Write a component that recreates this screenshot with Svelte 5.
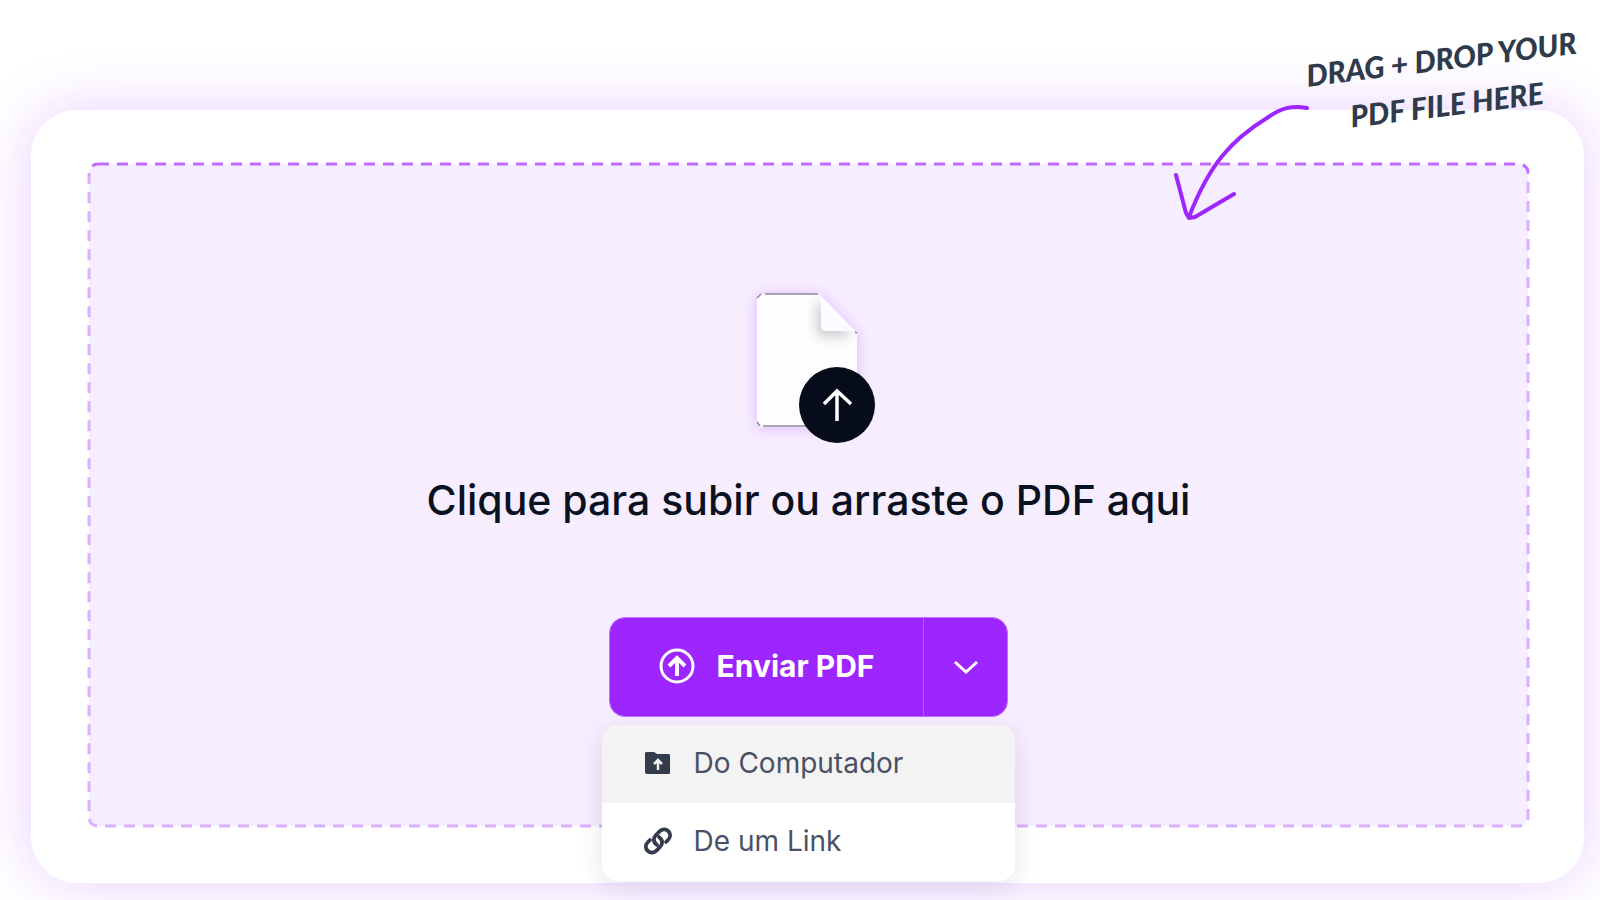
<script>
  let menuOpen = $state(true)
  let active = $state('computer')

  const sources = [
    { id: 'computer', label: 'Do Computador' },
    { id: 'link', label: 'De um Link' }
  ]
</script>

<main class="page">
  <section class="card">
    <div class="dropzone">
      <svg class="outline" aria-hidden="true">
        <defs>
          <linearGradient id="dash" x1="0" y1="0" x2="0" y2="1">
            <stop offset="0.01" stop-color="#c06cff" />
            <stop offset="0.02" stop-color="#dbb0ff" />
            <stop offset="0.98" stop-color="#dbb0ff" />
          </linearGradient>
        </defs>
        <rect width="100%" height="100%" rx="9" />
      </svg>

      <svg class="file" viewBox="2 0 136 152" aria-hidden="true">
        <defs>
          <filter id="glow" x="-30%" y="-30%" width="160%" height="160%">
            <feDropShadow dx="0" dy="1" stdDeviation="7" flood-color="#9d26ff" flood-opacity="0.24" />
          </filter>
          <filter id="fold" x="-60%" y="-60%" width="220%" height="220%">
            <feDropShadow dx="-4" dy="5" stdDeviation="6" flood-color="#000" flood-opacity="0.2" />
          </filter>
          <clipPath id="paper">
            <path d="M22 1H80L118 40V134H22Q18 134 18 130V5Q18 1 22 1Z" />
          </clipPath>
        </defs>
        <path d="M22 1H80L118 40V134H22Q18 134 18 130V5Q18 1 22 1Z" fill="#fdfcff" filter="url(#glow)" />
        <g clip-path="url(#paper)">
          <path d="M82 1V32Q82 38 88 38H118Z" fill="#fdfbff" filter="url(#fold)" />
        </g>
        <path d="M26 1H79M24 133H70M18 5L22 1M18 129L21 133M116 39L118 40" fill="none" stroke="#8d8a98" stroke-width="1.5" />
        <circle cx="98" cy="112" r="38" fill="#070c1a" />
        <path d="M98 128V97M85 111L98 98L112 111" fill="none" stroke="#fff" stroke-width="3.5" />
      </svg>

      <h1>Clique para subir ou arraste o PDF aqui</h1>

      <div class="upload">
        <div class="split">
          <button class="send" type="button">
            <svg viewBox="0 0 36 36" aria-hidden="true">
              <circle cx="18" cy="18" r="16" />
              <path d="M18 28V11M10 18L18 10L26 18" stroke-width="4" />
            </svg>
            Enviar PDF
          </button>
          <button
            class="toggle"
            type="button"
            aria-label="Mais opções"
            aria-expanded={menuOpen}
            onclick={() => (menuOpen = !menuOpen)}
          >
            <svg viewBox="0 0 26 14" aria-hidden="true">
              <path d="M2 2L13 12L24 2" />
            </svg>
          </button>
        </div>

        {#if menuOpen}
          <div class="menu">
            {#each sources as source (source.id)}
              <button
                type="button"
                class="item"
                class:active={active === source.id}
                onmouseenter={() => (active = source.id)}
              >
                {#if source.id === 'computer'}
                  <svg viewBox="0 0 28 28" aria-hidden="true">
                    <path d="M1 4Q1 3 3 3H10L13 5H25Q26 5 26 7V24Q26 25 25 25H3Q1 25 1 23Z" fill="#333c4d" />
                    <path d="M14 21V11M10 15L14 11L18 15" fill="none" stroke="#f3f3f4" stroke-width="2.5" />
                  </svg>
                {:else}
                  <svg viewBox="0 0 28 28" aria-hidden="true">
                    <g fill="none" stroke="#333c4d" stroke-width="3.8" stroke-linecap="round">
                      <path d="M13 18C9 15 9 11 12 8L16 4C22 -1 30 7 24 13L22 15" />
                      <path d="M15 10C19 13 19 17 16 20L12 24C6 29 -2 21 4 15L6 13" />
                    </g>
                  </svg>
                {/if}
                {source.label}
              </button>
            {/each}
          </div>
        {/if}
      </div>
    </div>

    <svg class="arrow" viewBox="0 0 136 118" aria-hidden="true">
      <path d="M134 5C119 2 108 5 94 15C58 37 36 62 16 114M3 72L13 110L16 115L22 114L61 91" />
    </svg>
    <p class="note">DRAG + DROP YOUR<br />PDF FILE HERE</p>
  </section>
</main>

<style>
  :global(body) {
    margin: 0;
    background: #fff;
  }

  .page {
    box-sizing: border-box;
    padding: 110px 16px 17px 31px;
    overflow: hidden;
    font-family: Inter, "Liberation Sans", sans-serif;
  }

  .card {
    position: relative;
    padding: 54px 56px 57px 58px;
    border-radius: 46px;
    background: #fff;
    box-shadow: 0 0 60px rgba(157, 38, 255, 0.22);
  }

  .dropzone {
    position: relative;
    display: flex;
    flex-direction: column;
    align-items: center;
    padding: 129px 24px 109px;
    border-radius: 9px;
    background: #f6edff;
  }

  .outline {
    position: absolute;
    inset: 0;
    width: 100%;
    height: 100%;
    overflow: visible;
    pointer-events: none;
  }

  .outline rect {
    fill: none;
    stroke: url(#dash);
    stroke-width: 3;
    stroke-dasharray: 11 8;
  }

  .file {
    width: 136px;
    height: 152px;
    overflow: visible;
  }

  h1 {
    margin: 31px 0 93px;
    color: #0a1222;
    font-size: 41px;
    font-weight: 500;
    line-height: 48px;
    text-align: center;
  }

  .upload {
    position: relative;
  }

  .split {
    display: flex;
    height: 100px;
    box-sizing: border-box;
    border: 1px solid #bd70ff;
    border-radius: 16px;
    overflow: hidden;
    background: #9d26ff;
  }

  button {
    border: 0;
    background: none;
    color: inherit;
    font-family: inherit;
    cursor: pointer;
  }

  .send {
    display: flex;
    align-items: center;
    gap: 22px;
    padding: 0 49px 2px;
    color: #fff;
    font-size: 30px;
    font-weight: 700;
  }

  .send svg {
    width: 36px;
    height: 36px;
    fill: none;
    stroke: #fff;
    stroke-width: 3;
  }

  .toggle {
    display: flex;
    align-items: center;
    justify-content: center;
    width: 84px;
    border-left: 1px solid #b65cff;
  }

  .toggle svg {
    width: 26px;
    height: 14px;
    fill: none;
    stroke: #fff;
    stroke-width: 3;
  }

  .menu {
    position: absolute;
    top: 108px;
    left: -7px;
    right: -7px;
    z-index: 2;
    border-radius: 16px;
    overflow: hidden;
    background: #fff;
    box-shadow: 0 6px 24px rgba(60, 30, 100, 0.12);
  }

  .item {
    display: flex;
    align-items: center;
    gap: 22px;
    width: 100%;
    height: 78px;
    padding: 0 42px 3px;
    color: #4a5164;
    font-size: 28px;
    text-align: left;
  }

  .item.active {
    background: #f3f3f4;
  }

  .item svg {
    width: 28px;
    height: 28px;
    overflow: visible;
  }

  .arrow {
    position: absolute;
    top: -7px;
    right: 275px;
    width: 136px;
    height: 118px;
    fill: none;
    stroke: #9d26ff;
    stroke-width: 4;
    stroke-linecap: round;
    stroke-linejoin: round;
  }

  .note {
    position: absolute;
    top: -75px;
    right: 4px;
    margin: 0;
    color: #2f3a4b;
    font-family: Lato, sans-serif;
    font-size: 30px;
    font-style: italic;
    font-weight: 900;
    line-height: 46px;
    text-align: center;
    white-space: nowrap;
    transform: rotate(-7deg);
  }
</style>
